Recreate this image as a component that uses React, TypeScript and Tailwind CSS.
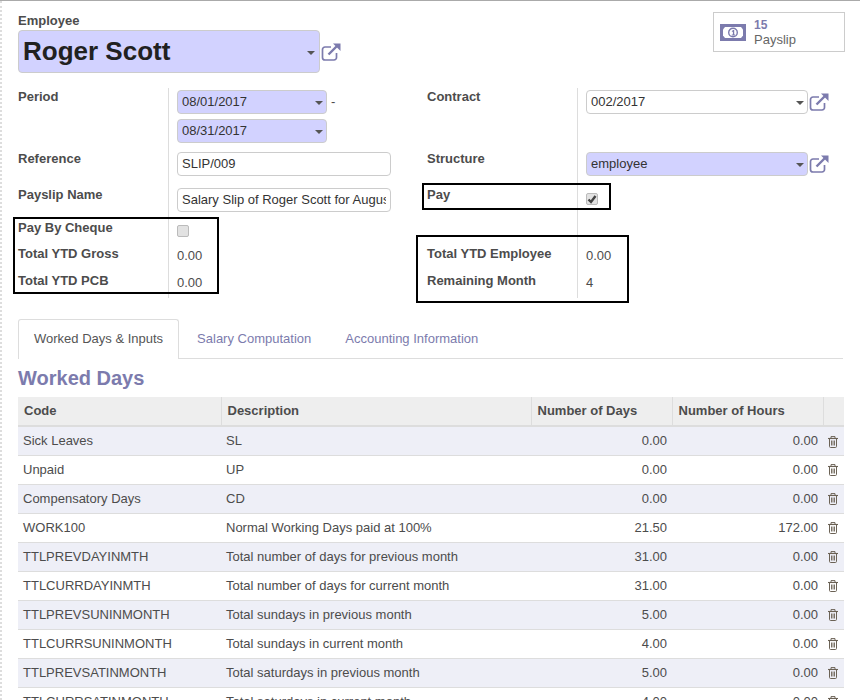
const rows = [
  ['Sick Leaves', 'SL', '0.00', '0.00'],
  ['Unpaid', 'UP', '0.00', '0.00'],
  ['Compensatory Days', 'CD', '0.00', '0.00'],
  ['WORK100', 'Normal Working Days paid at 100%', '21.50', '172.00'],
  ['TTLPREVDAYINMTH', 'Total number of days for previous month', '31.00', '0.00'],
  ['TTLCURRDAYINMTH', 'Total number of days for current month', '31.00', '0.00'],
  ['TTLPREVSUNINMONTH', 'Total sundays in previous month', '5.00', '0.00'],
  ['TTLCURRSUNINMONTH', 'Total sundays in current month', '4.00', '0.00'],
  ['TTLPREVSATINMONTH', 'Total saturdays in previous month', '5.00', '0.00'],
  ['TTLCURRSATINMONTH', 'Total saturdays in current month', '4.00', '0.00'],
]

const Caret = () => (
  <span className="absolute right-[4px] top-1/2 -translate-y-[1px] border-x-[4px] border-t-[4px] border-x-transparent border-t-[#555]" />
)

const LinkIcon = () => (
  <svg viewBox="0 0 20 18" className="w-[20px] h-[18px] shrink-0" fill="none" stroke="#7c7bad">
    <path d="M10 4H4a2.500 2.500 0 0 0-2.500 2.500v8A2.500 2.500 0 0 0 4 17h9a2.500 2.500 0 0 0 2.500-2.500V10" strokeWidth="1.700" />
    <path d="M7.500 11.500 16 3" strokeWidth="2.400" />
    <path d="M12 .5h7.500V8z" fill="#7c7bad" stroke="none" />
  </svg>
)

const MoneyIcon = () => (
  <svg viewBox="0 0 26 17" className="w-[26px] h-[17px] shrink-0">
    <path d="M0 0h26v17H0z" fill="#7c7bad" />
    <path d="M5 3h16l2 2.500v6L21 14H5l-2-2.500v-6z" fill="#fff" />
    <circle cx="13" cy="8.500" r="4.300" fill="#fff" stroke="#7c7bad" strokeWidth="1.400" />
    <path d="M11.800 7 13.300 6h.9v4.500h1v1h-3.400v-1h1.100V7.400l-.9.500z" fill="#7c7bad" />
  </svg>
)

const TrashIcon = () => (
  <svg viewBox="0 0 10 12" className="w-[10px] h-[12px] inline-block" fill="none" stroke="#6b6255">
    <path d="M0 2.500h10" strokeWidth="1.100" />
    <path d="M3 2.500V.6h4v1.900" strokeWidth="1" />
    <path d="M1.500 2.500v7.900q0 1.100 1.100 1.100h4.800q1.100 0 1.100-1.100V2.500" strokeWidth="1" />
    <path d="M3.500 4.500v5M5 4.500v5M6.500 4.500v5" strokeWidth=".9" />
  </svg>
)

const Box = ({ value, filled, className }: { value: string; filled?: boolean; className: string }) => (
  <div className={`relative h-[24px] ${className}`}>
    <input
      readOnly
      value={value}
      className={`w-full h-full rounded-[4px] border border-[#ccc] pl-[4px] pr-[18px] pb-[2px] outline-none text-[#333] ${filled ? 'bg-[#d2d2ff]' : 'bg-white'}`}
    />
    <Caret />
  </div>
)

const TextInput = ({ value }: { value: string }) => (
  <input
    readOnly
    value={value}
    className="w-full h-[24px] rounded-[4px] border border-[#ccc] bg-white px-[4px] pb-[2px] outline-none text-[#333]"
  />
)

const Check = ({ checked }: { checked?: boolean }) => (
  <div className="w-[12px] h-[12px] rounded-[2px] border border-[#bbb] bg-[#e2e2e2] flex items-center justify-center">
    {checked && (
      <svg viewBox="0 0 10 10" className="w-[10px] h-[10px]" fill="none" stroke="#444" strokeWidth="2.400">
        <path d="M1.500 5.500 4 8l4.500-6" />
      </svg>
    )}
  </div>
)

const Field = ({ label, height, children }: { label?: string; height: string; children?: React.ReactNode }) => (
  <div className={`flex ${height}`}>
    <div className="w-[150px] shrink-0 font-bold text-[#4c4c4c] leading-[18px]">{label}</div>
    <div className="flex-1 border-l border-[#ddd] pl-[8px]">{children}</div>
  </div>
)

const Num = ({ children }: { children: React.ReactNode }) => (
  <div className="pt-[2px] leading-[18px] text-[#4c4c4c]">{children}</div>
)

const App = () => {
  return (
    <div className="h-[700px] w-[860px] overflow-hidden border-t border-[#aaa] bg-white text-[13px] text-[#4c4c4c] font-['Liberation_Sans',Arial,sans-serif]">
      <div className="relative h-full border-l-2 border-dotted border-l-[#ddd] pl-[16px] pr-[16px]">
        {/* Header */}
        <div className="flex justify-between h-[87px] pt-[10px]">
          <div>
            <div className="font-bold leading-[19px]">Employee</div>
            <div className="flex items-center gap-[1px]">
              <div className="relative w-[302px] h-[43px] rounded-[4px] border border-[#ccc] bg-[#d2d2ff] pl-[4px] flex items-center">
                <span className="text-[26px] font-bold text-[#212121]">Roger Scott</span>
                <Caret />
              </div>
              <LinkIcon />
            </div>
          </div>
          <div className="flex items-center gap-[8px] w-[132px] h-[40px] mt-[1px] -mr-px border border-[#ccc] pl-[6px]">
            <MoneyIcon />
            <div>
              <div className="font-bold text-[12px] leading-[15px] text-[#7c7bad]">15</div>
              <div className="leading-[14px] text-[#666]">Payslip</div>
            </div>
          </div>
        </div>

        {/* Form groups */}
        <div className="flex gap-[36px]">
          <div className="w-[373px]">
            <Field label="Period" height="h-[62px]">
              <div className="pt-[2px] flex items-center gap-[4px]">
                <Box value="08/01/2017" filled className="w-[150px]" />
                <span>-</span>
              </div>
              <Box value="08/31/2017" filled className="w-[150px] mt-[5px]" />
            </Field>
            <Field label="Reference" height="h-[36px]">
              <div className="pt-[2px]"><TextInput value="SLIP/009" /></div>
            </Field>
            <Field label="Payslip Name" height="h-[33px]">
              <div className="pt-[2px]"><TextInput value="Salary Slip of Roger Scott for August 2017" /></div>
            </Field>
            <Field label="Pay By Cheque" height="h-[26px]">
              <div className="pt-[6px]"><Check /></div>
            </Field>
            <Field label="Total YTD Gross" height="h-[27px]">
              <Num>0.00</Num>
            </Field>
            <Field label="Total YTD PCB" height="h-[26px]">
              <Num>0.00</Num>
            </Field>
          </div>

          <div className="w-[403px]">
            <Field label="Contract" height="h-[62px]">
              <div className="pt-[2px] flex items-center gap-[1px]">
                <Box value="002/2017" className="w-[222px]" />
                <LinkIcon />
              </div>
            </Field>
            <Field label="Structure" height="h-[36px]">
              <div className="pt-[2px] flex items-center gap-[1px]">
                <Box value="employee" filled className="w-[222px]" />
                <LinkIcon />
              </div>
            </Field>
            <Field label="Pay" height="h-[33px]">
              <div className="pt-[7px]"><Check checked /></div>
            </Field>
            <Field height="h-[26px]" />
            <Field label="Total YTD Employee" height="h-[27px]">
              <Num>0.00</Num>
            </Field>
            <Field label="Remaining Month" height="h-[26px]">
              <Num>4</Num>
            </Field>
          </div>
        </div>

        {/* Tabs */}
        <div className="flex h-[40px] mt-[21px] mr-px border-b border-[#ddd]">
          <div className="h-[40px] px-[15px] pb-[2px] border border-b-0 border-[#ddd] rounded-t-[3px] bg-white flex items-center text-[#555]">
            Worked Days &amp; Inputs
          </div>
          <div className="ml-[2px] px-[16px] flex items-center text-[#7c7bad]">Salary Computation</div>
          <div className="ml-[2px] px-[16px] flex items-center text-[#7c7bad]">Accounting Information</div>
        </div>

        <h2 className="mt-[7px] text-[20px] leading-[24px] font-bold text-[#7c7bad]">Worked Days</h2>

        {/* Table */}
        <table className="mt-[7px] w-[826px] table-fixed border-collapse">
          <colgroup>
            <col className="w-[203px]" />
            <col className="w-[310px]" />
            <col className="w-[141px]" />
            <col className="w-[151px]" />
            <col className="w-[21px]" />
          </colgroup>
          <thead>
            <tr className="h-[29px] bg-[#eee] border-b-2 border-[#ddd] font-bold">
              <th className="border-r border-[#ddd] pl-[6px] text-left">Code</th>
              <th className="border-r border-[#ddd] pl-[6px] text-left">Description</th>
              <th className="border-r border-[#ddd] pl-[6px] text-left">Number of Days</th>
              <th className="border-r border-[#ddd] pl-[6px] text-left">Number of Hours</th>
              <th />
            </tr>
          </thead>
          <tbody>
            {rows.map((row, i) => (
              <tr key={i} className={`h-[29px] border-b border-[#ddd] ${i % 2 === 0 ? 'bg-[#eeeff7]' : 'bg-white'}`}>
                <td className="pl-[5px]">{row[0]}</td>
                <td className="pl-[5px]">{row[1]}</td>
                <td className="pr-[5px] text-right">{row[2]}</td>
                <td className="pr-[5px] text-right">{row[3]}</td>
                <td className="pl-[5px]"><TrashIcon /></td>
              </tr>
            ))}
          </tbody>
        </table>

        {/* Annotation boxes drawn over the form */}
        <div className="absolute left-[11px] top-[216px] w-[206px] h-[77px] border-2 border-black pointer-events-none" />
        <div className="absolute left-[420px] top-[182px] w-[189px] h-[27px] border-2 border-black pointer-events-none" />
        <div className="absolute left-[414px] top-[234px] w-[213px] h-[68px] border-2 border-black pointer-events-none" />
      </div>
    </div>
  )
}

export default App
